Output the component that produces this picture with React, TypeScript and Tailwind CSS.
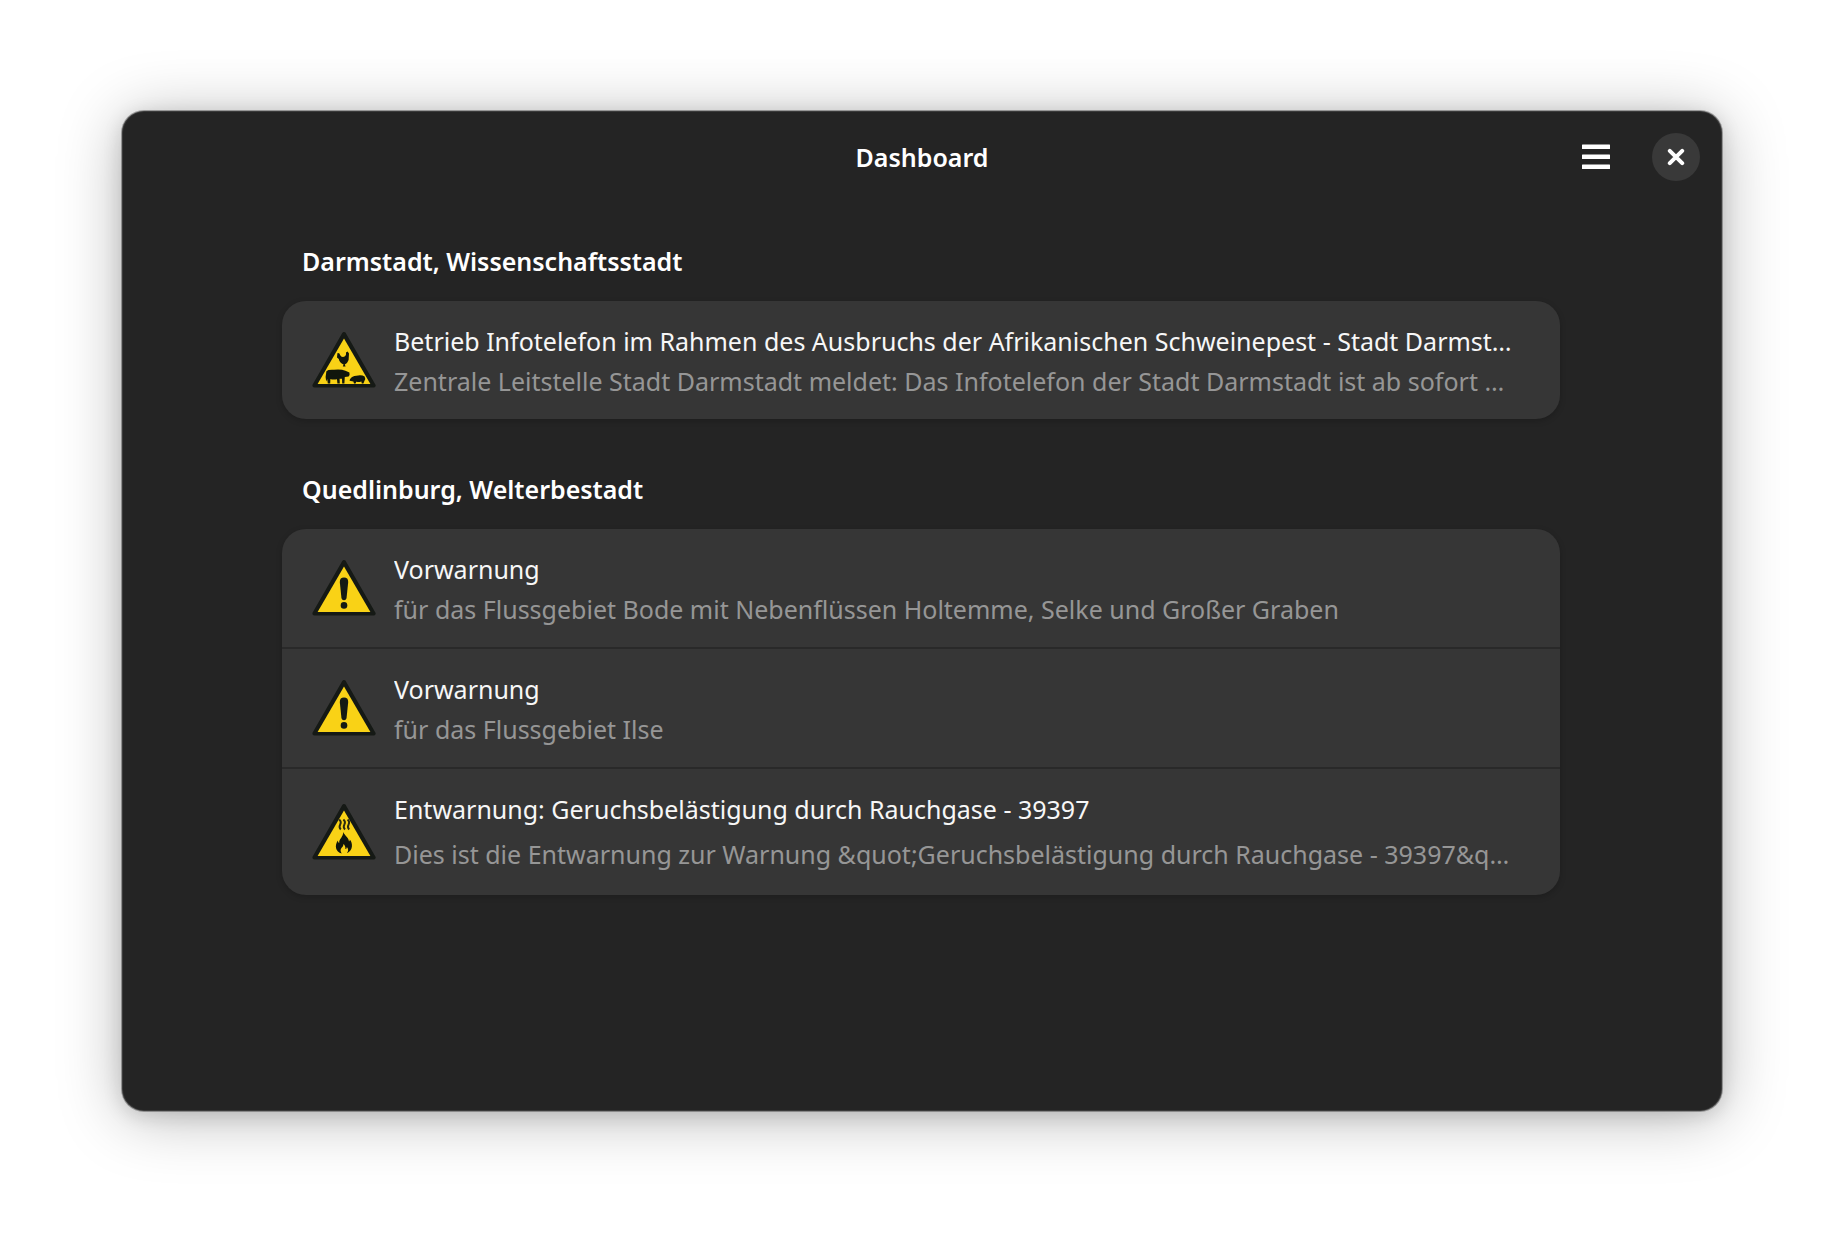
import React from "react";

type Kind = "animal" | "general" | "smoke";

type Warning = {
  kind: Kind;
  title: string;
  body: string;
  tall?: boolean;
};

type Place = {
  id: string;
  name: string;
  warnings: Warning[];
};

const places: Place[] = [
  {
    id: "darmstadt",
    name: "Darmstadt, Wissenschaftsstadt",
    warnings: [
      {
        kind: "animal",
        title:
          "Betrieb Infotelefon im Rahmen des Ausbruchs der Afrikanischen Schweinepest - Stadt Darmst…",
        body: "Zentrale Leitstelle Stadt Darmstadt meldet: Das Infotelefon der Stadt Darmstadt ist ab sofort …",
      },
    ],
  },
  {
    id: "quedlinburg",
    name: "Quedlinburg, Welterbestadt",
    warnings: [
      {
        kind: "general",
        title: "Vorwarnung",
        body: "für das Flussgebiet Bode mit Nebenflüssen Holtemme, Selke und Großer Graben",
      },
      { kind: "general", title: "Vorwarnung", body: "für das Flussgebiet Ilse" },
      {
        kind: "smoke",
        title: "Entwarnung: Geruchsbelästigung durch Rauchgase - 39397",
        body: "Dies ist die Entwarnung zur Warnung &quot;Geruchsbelästigung durch Rauchgase - 39397&q…",
        tall: true,
      },
    ],
  },
];

function Symbol({ kind }: { kind: Kind }) {
  if (kind === "general") {
    return (
      <g fill="#141a14">
        <path d="M27.8 25Q27.8 20.6 32 20.6T36.2 25L34.6 40.5Q34.3 43.3 32 43.3T29.4 40.5Z" />
        <circle cx="32" cy="48.4" r="3.3" />
      </g>
    );
  }
  if (kind === "smoke") {
    return (
      <g>
        <g fill="none" stroke="#2a2a10" strokeWidth="1.9">
          <path d="M27.2 18.5q2.6 2.2 1 5t0.6 5" />
          <path d="M31.4 18.5q2.6 2.2 1 5t0.6 5" />
          <path d="M35.6 18.5q2.6 2.2 1 5t0.6 5" />
        </g>
        <path
          fill="#10160c"
          d="M31.2 31C33 35 36.6 36.2 37 40.6Q37.8 39.8 37.8 38.4C41 42 41.2 49.4 34.8 52.3C36.8 50 36.4 47.6 34.8 46C34.8 47.4 34.2 48 33.4 48C33.6 45.4 32.6 44 31.4 43C31.6 46 28.6 46.8 28.6 49.6Q28.6 51.4 29.8 52.4C23.4 50.6 22.4 44.6 25.8 39.4Q26 41.4 27.2 42C26.8 38 31.4 36 31.2 31Z"
        />
      </g>
    );
  }
  return (
    <g fill="#10160c">
      <path d="M25.4 24.2Q27.4 23.6 28.4 26.4Q30 28.6 32.6 27.6Q34.6 26.2 34 23.6L35.6 22.4L37 24.4L36.6 31Q35.4 34.6 32.8 35.4L33.6 37.6H30.8L31.6 35.4Q27.4 33.8 26.8 30L25 28.6Z" />
      <path d="M14.4 42.2Q16 40.4 22 40.8Q29 40 33.4 41.8L37.4 43.4Q38.2 46.4 36.6 47.6L32.8 48L32.4 54.4H30.2L30 49.8L27.6 49.8L27.8 54.4H25.4L25 50.2Q21 51 18.4 50L18.2 54.4H15.8L15.2 50L14.2 52.6L13.6 48Z" />
      <path d="M38 50.2Q40 47 44.4 46.8Q49.6 45.6 52.6 47.6Q54 50 52.4 52L51.4 54.4H49.8L49.4 52.4Q46.6 53.2 44.2 52.8L43.6 54.6H42L41.4 52.6L37.6 51.8Z" />
    </g>
  );
}

function WarningIcon({ kind }: { kind: Kind }) {
  return (
    <svg viewBox="0 0 64 64" className="size-16 shrink-0" aria-hidden="true">
      <path
        d="M32 5L61.6 56.6H2.4Z"
        fill="#151915"
        stroke="#151915"
        strokeWidth="4"
        strokeLinejoin="round"
      />
      <path d="M32 9.5L58.4 55H5.6Z" fill="#f9d216" />
      <Symbol kind={kind} />
    </svg>
  );
}

function WarningRow({ kind, title, body, tall }: Warning) {
  return (
    <li className="flex items-center border-t-2 border-[#292929] pt-5 pr-9 pb-[18px] pl-[30px] first:border-t-0">
      <WarningIcon kind={kind} />
      <div className="ml-[18px] min-w-0 flex-1">
        <p className="truncate leading-10 text-[#f7f7f7]">{title}</p>
        <p
          className={
            tall
              ? "truncate pt-[5px] pb-[3px] leading-10 text-[#969696]"
              : "truncate leading-10 text-[#969696]"
          }
        >
          {body}
        </p>
      </div>
    </li>
  );
}

export default function App() {
  return (
    <div className="flex min-h-screen flex-col bg-white px-[122px] pt-[111px] pb-[133px] font-['Noto_Sans',sans-serif] text-[25px]">
      <main className="flex flex-1 flex-col rounded-[22px] bg-[#242424] shadow-[0_0_0_1px_rgba(0,0,0,0.3),0_4px_20px_rgba(0,0,0,0.14),0_6px_64px_rgba(0,0,0,0.28),inset_0_0_0_1px_rgba(255,255,255,0.1)]">
        <header className="grid h-[92px] grid-cols-[1fr_auto_1fr] items-center px-[22px]">
          <h1 className="col-start-2 pt-0.5 font-semibold text-white">Dashboard</h1>
          <div className="flex items-center justify-end gap-8">
            <button
              type="button"
              aria-label="Menu"
              className="flex size-12 items-center justify-center"
            >
              <svg viewBox="0 0 28 26" className="h-[26px] w-7" fill="#fff">
                <rect y="0.4" width="28" height="4.5" rx="0.5" />
                <rect y="10.4" width="28" height="4.5" rx="0.5" />
                <rect y="20.4" width="28" height="4.5" rx="0.5" />
              </svg>
            </button>
            <button
              type="button"
              aria-label="Close"
              className="flex size-12 items-center justify-center rounded-full bg-[#393939]"
            >
              <svg
                viewBox="0 0 18 18"
                className="size-[18px]"
                stroke="#fff"
                strokeWidth="4"
                strokeLinecap="round"
              >
                <path d="M2.8 2.8L15.2 15.2M15.2 2.8L2.8 15.2" />
              </svg>
            </button>
          </div>
        </header>
        <div className="flex flex-col gap-[50px] pt-[38px] pr-[162px] pl-40">
          {places.map((place) => (
            <section key={place.id} aria-labelledby={place.id}>
              <h2 id={place.id} className="mb-5 pl-5 leading-10 font-semibold text-white">
                {place.name}
              </h2>
              <ul className="overflow-hidden rounded-3xl bg-[#363636] shadow-[0_2px_6px_rgba(0,0,0,0.2)]">
                {place.warnings.map((warning, index) => (
                  <WarningRow key={index} {...warning} />
                ))}
              </ul>
            </section>
          ))}
        </div>
      </main>
    </div>
  );
}
